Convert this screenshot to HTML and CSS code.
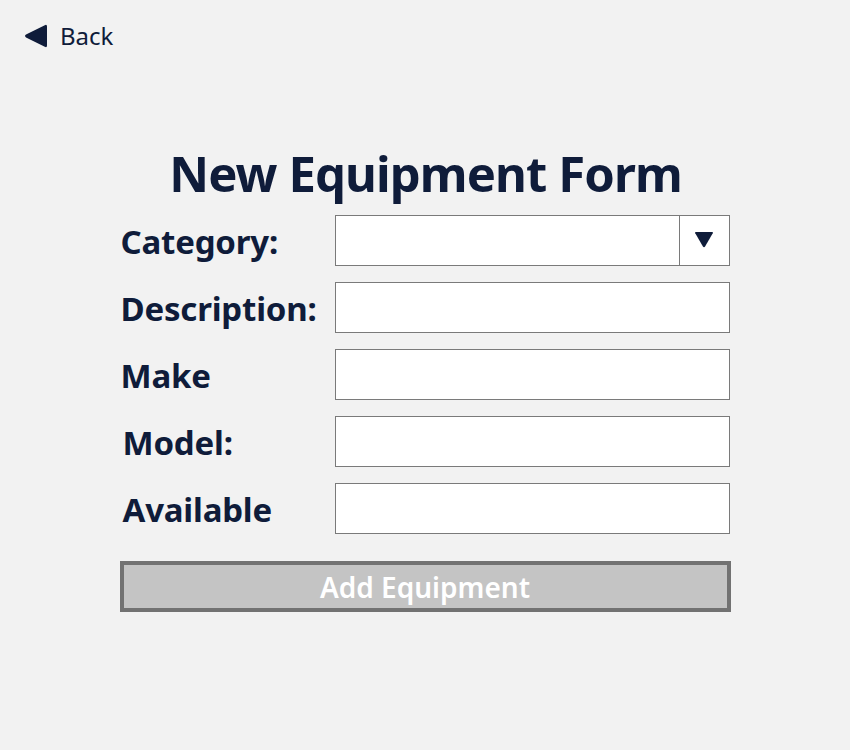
FILE: index.html
```html
<!DOCTYPE html>
<html lang="en">
<head>
    <meta charset="UTF-8">
    <meta name="viewport" content="width=device-width, initial-scale=1.0">
    <title>New Equipment</title>
    <link rel="stylesheet" href="styles.css">
</head>
<body>
    <a class="back-link" href="#">
        <svg class="back-icon" viewBox="0 0 24 24">
            <path d="M23 2.5 L23 21.5 Q23 24 20.8 22.8 L2 13.4 Q0 12 2 10.6 L20.8 1.2 Q23 0 23 2.5 Z" fill="#0f1c3a"/>
        </svg>
        <span>Back</span>
    </a>

    <div class="form-container">
        <h1>New Equipment Form</h1>
        <form class="equipment-form">
            <label for="category">Category:</label>
            <div class="select-box">
                <div class="select-value" id="category"></div>
                <div class="select-arrow">
                    <svg viewBox="0 0 20 20">
                        <path d="M1.5 2 L18.5 2 Q20 2 19.2 3.5 L11.3 17.2 Q10 19 8.7 17.2 L0.8 3.5 Q0 2 1.5 2 Z" fill="#0f1c3a"/>
                    </svg>
                </div>
            </div>

            <label for="description">Description:</label>
            <input type="text" id="description">

            <label for="make">Make</label>
            <input type="text" id="make">

            <label for="model" class="shifted">Model:</label>
            <input type="text" id="model">

            <label for="available" class="shifted">Available</label>
            <input type="text" id="available">

            <button type="button" class="add-btn">Add Equipment</button>
        </form>
    </div>
</body>
</html>
```

FILE: styles.css
```css
* {
    margin: 0;
    padding: 0;
    box-sizing: border-box;
}

body {
    font-family: 'Noto Sans', 'Open Sans', sans-serif;
    background: #f2f2f2;
    color: #0f1c3a;
    width: 850px;
    height: 750px;
}

.back-link {
    display: inline-flex;
    align-items: center;
    gap: 12px;
    margin: 23px 0 0 24px;
    color: #0f1c3a;
    text-decoration: none;
    font-size: 24px;
    line-height: 26px;
}

.back-icon {
    width: 24px;
    height: 24px;
}

.form-container {
    width: 611px;
    margin: 92px auto 0;
    padding-left: 1px;
}

h1 {
    text-align: center;
    font-size: 49px;
    font-weight: 700;
    letter-spacing: -0.9px;
    line-height: 56px;
    margin-bottom: 14px;
}

.equipment-form {
    display: grid;
    grid-template-columns: 214px 395px;
    grid-auto-rows: 51px;
    row-gap: 16px;
}

label {
    display: flex;
    align-items: center;
    font-size: 33px;
    font-weight: 700;
    letter-spacing: -0.2px;
    padding-top: 2px;
}

label.shifted {
    padding-left: 2px;
}

input,
.select-box {
    height: 51px;
    border: 1px solid #7a7a7a;
    background: #fff;
    font-size: 20px;
    padding: 0 8px;
    outline: none;
}

.select-box {
    display: flex;
    padding: 0;
}

.select-value {
    flex: 1;
}

.select-arrow {
    width: 50px;
    border-left: 1px solid #7a7a7a;
    display: flex;
    align-items: center;
    justify-content: center;
}

.select-arrow svg {
    width: 20px;
    height: 19px;
    margin-top: -3px;
}

.add-btn {
    grid-column: 1 / -1;
    margin-top: 11px;
    height: 51px;
    width: 611px;
    margin-left: -1px;
    background: #c4c4c4;
    border: 4px solid #727272;
    color: #fff;
    font-family: inherit;
    font-size: 28px;
    font-weight: 600;
}
```
